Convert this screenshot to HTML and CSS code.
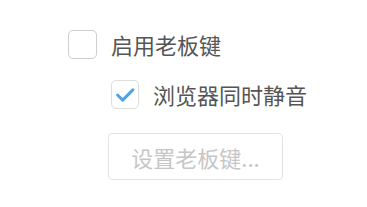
FILE: index.html
```html
<!DOCTYPE html>
<html lang="zh">
<head>
<meta charset="utf-8">
<link rel="stylesheet" href="styles.css">
</head>
<body>
<div class="panel">
  <label class="row row-main">
    <span class="box"></span>
    <span class="label">启用老板键</span>
  </label>
  <label class="row row-sub">
    <span class="box box-checked">
      <svg viewBox="0 0 28 28" width="28" height="28"><path d="M6 14 L11.5 19.5 L22.5 8.5" fill="none" stroke="#4fa3e6" stroke-width="3.2" stroke-linecap="round" stroke-linejoin="round"/></svg>
    </span>
    <span class="label">浏览器同时静音</span>
  </label>
  <button class="btn" disabled>设置老板键...</button>
</div>
</body>
</html>
```

FILE: styles.css
```css
html, body {
  margin: 0;
  padding: 0;
  background: #ffffff;
}
body {
  font-family: "Noto Sans CJK SC", "Noto Sans", sans-serif;
  width: 367px;
  height: 207px;
  overflow: hidden;
}
.panel {
  display: flex;
  flex-direction: column;
  align-items: flex-start;
  padding: 30px 0 0 68px;
}
.row {
  display: flex;
  align-items: center;
  gap: 14px;
}
.row-sub {
  margin: 21px 0 0 43px;
}
.box {
  box-sizing: border-box;
  width: 29px;
  height: 29px;
  border: 1.5px solid #cfcfcf;
  border-radius: 5px;
  background: #fff;
  display: flex;
  align-items: center;
  justify-content: center;
}
.box-checked {
  width: 28px;
  height: 29px;
  border-color: #dedede;
}
.label {
  font-size: 22px;
  line-height: 29px;
  color: #555555;
}
.btn {
  box-sizing: border-box;
  margin: 24px 0 0 40px;
  width: 175px;
  height: 47px;
  border: 1.5px solid #e3e3e3;
  border-radius: 4px;
  background: #ffffff;
  font-family: "Noto Sans CJK SC", "Noto Sans", sans-serif;
  font-size: 22px;
  color: #c6c6c6;
  padding: 0;
}
```
